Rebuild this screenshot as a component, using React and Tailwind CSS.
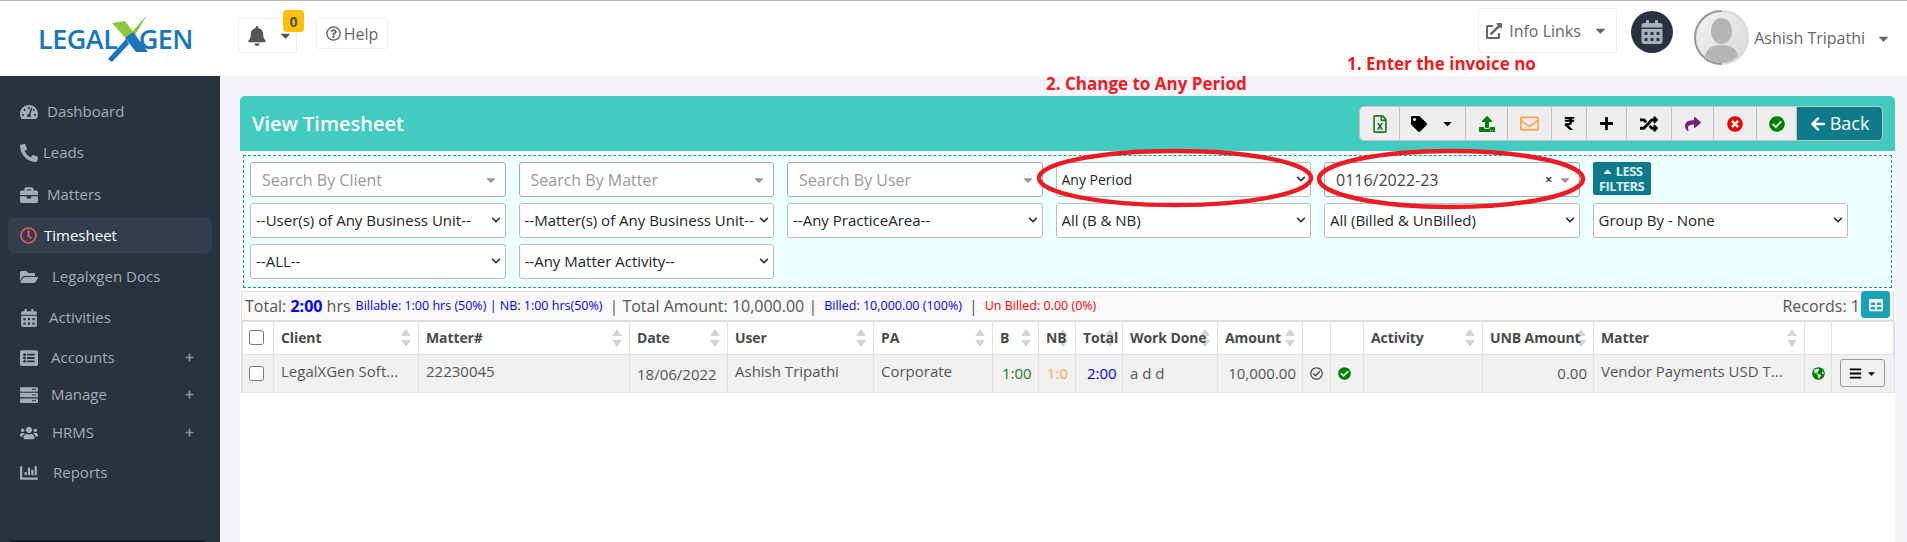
import {
  FaArrowLeft,
  FaBell,
  FaBriefcase,
  FaCalendarAlt,
  FaCaretDown,
  FaCaretUp,
  FaChartBar,
  FaCheckCircle,
  FaChevronDown,
  FaExternalLinkAlt,
  FaFolderOpen,
  FaGlobeAmericas,
  FaListAlt,
  FaPhoneAlt,
  FaPlus,
  FaRandom,
  FaRegCheckCircle,
  FaRegClock,
  FaRegEnvelope,
  FaRegFileExcel,
  FaRegQuestionCircle,
  FaRupeeSign,
  FaServer,
  FaShare,
  FaTachometerAlt,
  FaTable,
  FaTag,
  FaTimesCircle,
  FaUpload,
  FaUsers,
  FaBars,
} from "react-icons/fa";

const sideItems = [
  { label: "Dashboard", icon: FaTachometerAlt, row: "mt-0", gap: "w-[27px]" },
  { label: "Leads", icon: FaPhoneAlt, row: "mt-[6px]", gap: "w-[23px]" },
  { label: "Matters", icon: FaBriefcase, row: "mt-[7px]", gap: "w-[27px]" },
  { label: "Timesheet", icon: FaRegClock, row: "mt-[6px]", gap: "w-[24px]", active: true },
  { label: "Legalxgen Docs", icon: FaFolderOpen, row: "mt-[6px]", gap: "w-[32px]" },
  { label: "Activities", icon: FaCalendarAlt, row: "mt-[6px]", gap: "w-[29px]" },
  { label: "Accounts", icon: FaListAlt, row: "mt-[5px]", gap: "w-[31px]", plus: true },
  { label: "Manage", icon: FaServer, row: "mt-[2px]", gap: "w-[31px]", plus: true },
  { label: "HRMS", icon: FaUsers, row: "mt-[3px]", gap: "w-[32px]", plus: true },
  { label: "Reports", icon: FaChartBar, row: "mt-[5px]", gap: "w-[33px]" },
];

const tools = [
  { icon: FaRegFileExcel, color: "text-[#1d7a1d]", w: "w-[40px]", size: 18 },
  { icon: FaTag, color: "text-black", w: "w-[66px]", caret: true, size: 16 },
  { icon: FaUpload, color: "text-[#0a7d0a]", w: "w-[42px]", size: 16 },
  { icon: FaRegEnvelope, color: "text-[#ffa64d]", w: "w-[44px]", size: 19 },
  { icon: FaRupeeSign, color: "text-black", w: "w-[35px]", size: 15 },
  { icon: FaPlus, color: "text-black", w: "w-[40px]", size: 15 },
  { icon: FaRandom, color: "text-black", w: "w-[45px]", size: 18 },
  { icon: FaShare, color: "text-[#7b1f7b]", w: "w-[42px]", size: 16 },
  { icon: FaTimesCircle, color: "text-[#f00000]", w: "w-[43px]", size: 16 },
  { icon: FaCheckCircle, color: "text-[#008000]", w: "w-[40px]", size: 16 },
];

const columns = [
  { label: "", w: "w-[31px]", check: true },
  { label: "Client", w: "w-[145px]", sort: true },
  { label: "Matter#", w: "w-[211px]", sort: true },
  { label: "Date", w: "w-[98px]", sort: true },
  { label: "User", w: "w-[146px]", sort: true },
  { label: "PA", w: "w-[119px]", sort: true },
  { label: "B", w: "w-[46px]", sort: true },
  { label: "NB", w: "w-[37px]", sort: true },
  { label: "Total", w: "w-[47px]", sort: true },
  { label: "Work Done", w: "w-[95px]", sort: true },
  { label: "Amount", w: "w-[85px]", sort: true },
  { label: "", w: "w-[28px]" },
  { label: "", w: "w-[33px]" },
  { label: "Activity", w: "w-[119px]", sort: true },
  { label: "UNB Amount", w: "w-[111px]", sort: true },
  { label: "Matter", w: "w-[211px]", sort: true },
  { label: "", w: "w-[27px]" },
  { label: "", w: "w-[63px]" },
];

function SortArrows() {
  return (
    <svg width="10" height="18" viewBox="0 0 10 18" className="absolute right-[7px] top-[7px]">
      <path d="M5 0 L10 7 L0 7 Z M5 18 L10 11 L0 11 Z" fill="#d4d4d4" />
    </svg>
  );
}

function Logo() {
  return (
    <div className="relative flex w-[155px] items-center justify-between text-[27px] font-semibold leading-none tracking-[-0.5px] text-[#1b75bc]">
      <span>LEGAL</span>
      <span>GEN</span>
      <svg width="50" height="50" viewBox="0 0 50 50" className="absolute left-[69px] top-[-12px]">
        <path d="M5 10 L18 8 L30 24 L22 29 Z" fill="#8cc63f" />
        <path d="M40 2 L28 22 L22 29 L24 20 Z" fill="#8cc63f" />
        <path d="M18 25 L26 19 L41 39 L29 39 Z" fill="#1b75bc" />
        <path d="M22 31 L5 49 L1 46 L19 26 Z" fill="#1b75bc" />
      </svg>
    </div>
  );
}

function SearchSelect({ placeholder }) {
  return (
    <div className="flex h-[35px] items-center justify-between rounded-[3px] border border-[#aaaaaa] bg-white pl-[11px] pr-[7px]">
      <span className="text-[16px] text-[#999999]">{placeholder}</span>
      <FaCaretDown size={14} className="text-[#999999]" />
    </div>
  );
}

function NativeSelect({ value, small }) {
  return (
    <div className="relative h-[35px]">
      <select
        defaultValue={value}
        className={`h-full w-full appearance-none rounded-[3px] border border-[#bbbbbb] bg-white pl-[5px] pr-[16px] text-[#212529] ${
          small ? "text-[14px]" : "text-[15px]"
        }`}
      >
        <option>{value}</option>
      </select>
      <FaChevronDown size={10} className="absolute right-[5px] top-[12px] text-[#333333]" />
    </div>
  );
}

function Avatar() {
  return (
    <svg width="55" height="55" viewBox="0 0 55 55">
      <defs>
        <linearGradient id="avatarBg" x1="0" y1="0" x2="1" y2="1">
          <stop offset="0" stopColor="#f4f4f4" />
          <stop offset="1" stopColor="#d8d8d8" />
        </linearGradient>
      </defs>
      <circle cx="27.5" cy="27.5" r="26.5" fill="url(#avatarBg)" stroke="#d9d9d9" strokeWidth="2" />
      <path d="M27.5 1 A26.5 26.5 0 1 0 27.5 54" fill="none" stroke="#999999" strokeWidth="2" />
      <ellipse cx="27.5" cy="21" rx="10.5" ry="13" fill="#b5b5b5" />
      <path d="M11 46 C13 37 20 35 27.5 35 C35 35 42 37 44 46 C39 51 33 53 27.5 53 C22 53 16 51 11 46 Z" fill="#b5b5b5" />
    </svg>
  );
}

export default function App() {
  return (
    <div className="relative flex h-[542px] flex-col overflow-hidden bg-white font-['Open_Sans',sans-serif]">
      <header className="flex h-[76px] shrink-0 items-start border-t border-[#bbbbbb] bg-white">
        <div className="ml-[38px] mt-[24px]">
          <Logo />
        </div>
        <div className="relative ml-[45px] mt-[17px] flex h-[35px] w-[59px] items-center rounded-[3px] border border-[#eeeef5] pl-[8px] text-[#555555]">
          <FaBell size={20} />
          <FaCaretDown size={15} className="ml-[11px]" />
          <span className="absolute left-[44px] top-[-9px] flex h-[22px] w-[21px] items-center justify-center rounded-[4px] bg-[#ffc107] text-[14px] font-bold text-[#555555]">
            0
          </span>
        </div>
        <div className="ml-[19px] mt-[17px] flex h-[31px] w-[72px] items-center justify-center gap-[3px] rounded-[3px] border border-[#eeeef5] text-[16px] text-[#666666]">
          <FaRegQuestionCircle size={15} />
          Help
        </div>
        <div className="ml-auto mt-[7px] flex h-[45px] w-[139px] items-center rounded-[3px] border border-[#eeeef5] pl-[7px] text-[16px] text-[#666666]">
          <FaExternalLinkAlt size={16} />
          <span className="ml-[7px]">Info Links</span>
          <FaCaretDown size={15} className="ml-[12px]" />
        </div>
        <div className="ml-[14px] mt-[10px] flex h-[42px] w-[42px] items-center justify-center rounded-full bg-[#29323f]">
          <FaCalendarAlt size={24} className="text-[#a9b0bb]" />
        </div>
        <div className="ml-[21px] mt-[9px]">
          <Avatar />
        </div>
        <span className="ml-[5px] mt-[25px] text-[16px] text-[#666666]">Ashish Tripathi</span>
        <FaCaretDown size={15} className="ml-[11px] mt-[30px] text-[#666666]" />
        <div className="w-[16px]" />
      </header>

      <div className="flex min-h-0 flex-1">
        <aside className="relative w-[220px] shrink-0 bg-[#29323f] px-[8px] pt-[18px]">
          {sideItems.map((item) => (
            <div
              key={item.label}
              className={`flex h-[35px] items-center rounded-[6px] pl-[12px] pr-[18px] text-[15px] ${item.row} ${
                item.active ? "bg-[#333e4c] text-white" : "text-[#a5acb5]"
              }`}
            >
              <span className={`flex shrink-0 items-center ${item.gap}`}>
                <item.icon size={item.active ? 17 : 18} className={item.active ? "text-[#f05a5a]" : "text-[#a5acb5]"} />
              </span>
              <span>{item.label}</span>
              {item.plus && <FaPlus size={9} className="ml-auto text-[#8b939e]" />}
            </div>
          ))}
          <div className="absolute bottom-0 left-[10px] right-[15px] h-[2px] rounded-t bg-[#141b24]" />
        </aside>

        <main className="min-w-0 flex-1 bg-[#f3f5f9] pl-[20px] pr-[12px] pt-[20px]">
          <div className="h-full rounded-t-[5px] bg-white">
            <div className="flex h-[55px] items-center justify-between rounded-t-[5px] bg-[#42cbbf] pl-[12px] pr-[12px]">
              <h1 className="text-[20px] font-semibold text-white">View Timesheet</h1>
              <div className="flex h-[35px] overflow-hidden rounded-[5px] border border-[#c4c4c4] bg-[#eeeeee]">
                {tools.map((tool, i) => (
                  <div
                    key={i}
                    className={`flex items-center justify-center border-r border-[#c4c4c4] ${tool.w} ${tool.color}`}
                  >
                    <tool.icon size={tool.size} />
                    {tool.caret && <FaCaretDown size={13} className="ml-[14px] text-black" />}
                  </div>
                ))}
                <div className="flex w-[85px] items-center justify-center gap-[4px] bg-[#0f7b8a] text-[18px] text-white">
                  <FaArrowLeft size={16} />
                  Back
                </div>
              </div>
            </div>

            <div className="mx-[3px] mt-[4px] h-[133px] border border-dashed border-[#1a9a8a] bg-[#eeffff] px-[6px] pt-[6px]">
              <div className="grid grid-cols-[repeat(6,255.5px)] gap-x-[13px] gap-y-[6px]">
                <SearchSelect placeholder="Search By Client" />
                <SearchSelect placeholder="Search By Matter" />
                <SearchSelect placeholder="Search By User" />
                <NativeSelect value="Any Period" small />
                <div className="flex h-[35px] items-center rounded-[3px] border border-[#aaaaaa] bg-white pl-[11px] pr-[7px] text-[16px] text-[#444444]">
                  <span>0116/2022-23</span>
                  <span className="ml-auto text-[13px] font-bold leading-none">×</span>
                  <FaCaretDown size={14} className="ml-[5px] text-[#999999]" />
                </div>
                <div className="flex h-[33px] w-[58px] flex-col items-center justify-center rounded-[2px] bg-[#0f7b8a] text-[13px] font-bold leading-[15px] tracking-[-0.6px] text-[#d8f0f2]">
                  <span className="flex items-center gap-[2px]">
                    <FaCaretUp size={13} />
                    LESS
                  </span>
                  <span>FILTERS</span>
                </div>
                <NativeSelect value="--User(s) of Any Business Unit--" />
                <NativeSelect value="--Matter(s) of Any Business Unit--" />
                <NativeSelect value="--Any PracticeArea--" />
                <NativeSelect value="All (B & NB)" />
                <NativeSelect value="All (Billed & UnBilled)" />
                <NativeSelect value="Group By - None" />
                <NativeSelect value="--ALL--" />
                <NativeSelect value="--Any Matter Activity--" />
              </div>
            </div>

            <div className="ml-[1px] mr-[1px] mt-[3px] border-x border-t border-[#dddddd]">
              <div className="flex h-[30px] items-center whitespace-nowrap border-b-2 border-[#dddddd] bg-[#f8f8f8] pl-[3px] text-[16px] text-[#555555]">
                <span>
                  Total: <b className="font-bold text-[#0000ff]">2:00</b> hrs
                </span>
                <span className="ml-[5px] text-[12.5px] text-[#0000ff]">Billable: 1:00 hrs (50%) | NB: 1:00 hrs(50%)</span>
                <span className="ml-[7px]">| Total Amount: 10,000.00 |</span>
                <span className="ml-[7px] text-[12.5px] text-[#0000ff]">Billed: 10,000.00 (100%)</span>
                <span className="ml-[7px]">|</span>
                <span className="ml-[7px] text-[12.5px] text-[#ff0000]">Un Billed: 0.00 (0%)</span>
                <span className="ml-auto">Records: 1</span>
                <span className="ml-[1px] mr-[3px] mt-[-3px] flex h-[27px] w-[29px] items-center justify-center rounded-[4px] bg-[#17a2b8] text-white">
                  <FaTable size={14} />
                </span>
              </div>

              <table className="w-[1652px] table-fixed border-collapse text-[15px] text-[#555555]">
                <colgroup>
                  {columns.map((col, i) => (
                    <col key={i} className={col.w} />
                  ))}
                </colgroup>
                <thead>
                  <tr className="h-[32px]">
                    {columns.map((col, i) => (
                      <th
                        key={i}
                        className="relative border-x border-[#dee2e6] pl-[7px] text-left text-[14px] font-bold whitespace-nowrap text-[#4a4a4a]"
                      >
                        {col.sort && <SortArrows />}
                        {col.check ? (
                          <input type="checkbox" className="block size-[15px] -translate-x-px" />
                        ) : (
                          <span className="relative tracking-[-0.1px]">{col.label}</span>
                        )}
                      </th>
                    ))}
                  </tr>
                </thead>
                <tbody>
                  <tr className="h-[38px] border-y border-[#dee2e6] bg-[#f1f1f1] whitespace-nowrap">
                    <td className="border-x border-[#dee2e6] pl-[7px]">
                      <input type="checkbox" className="block size-[15px] -translate-x-px" />
                    </td>
                    <td className="border-x border-[#dee2e6] pl-[7px] pb-[4px]">LegalXGen Soft...</td>
                    <td className="border-x border-[#dee2e6] pl-[7px] pb-[4px]">22230045</td>
                    <td className="border-x border-[#dee2e6] pl-[7px] pt-[2px]">18/06/2022</td>
                    <td className="border-x border-[#dee2e6] pl-[7px] pb-[4px]">Ashish Tripathi</td>
                    <td className="border-x border-[#dee2e6] pl-[7px] pb-[4px]">Corporate</td>
                    <td className="border-x border-[#dee2e6] pl-[9px] text-[#1d7a1d]">1:00</td>
                    <td className="border-x border-[#dee2e6] pl-[8px] text-[#ffa64d]">1:0</td>
                    <td className="border-x border-[#dee2e6] pl-[11px] text-[#0000ff]">2:00</td>
                    <td className="border-x border-[#dee2e6] pl-[7px]">a d d</td>
                    <td className="border-x border-[#dee2e6] pr-[6px] text-right">10,000.00</td>
                    <td className="border-x border-[#dee2e6] pl-[7px]">
                      <FaRegCheckCircle size={13} className="text-[#444444]" />
                    </td>
                    <td className="border-x border-[#dee2e6] pl-[7px]">
                      <FaCheckCircle size={13} className="text-[#008000]" />
                    </td>
                    <td className="border-x border-[#dee2e6]" />
                    <td className="border-x border-[#dee2e6] pr-[6px] text-right">0.00</td>
                    <td className="border-x border-[#dee2e6] pl-[7px] pb-[4px]">Vendor Payments USD T...</td>
                    <td className="border-x border-[#dee2e6] pl-[7px]">
                      <FaGlobeAmericas size={13} className="text-[#008000]" />
                    </td>
                    <td className="border-x border-[#dee2e6] pl-[8px]">
                      <div className="flex h-[28px] w-[45px] items-center justify-center gap-[4px] rounded-[3px] border border-[#999999] text-black">
                        <FaBars size={13} />
                        <FaCaretDown size={11} />
                      </div>
                    </td>
                  </tr>
                </tbody>
              </table>
            </div>
          </div>
        </main>
      </div>

      {/* red notes drawn over the page */}
      <span className="absolute left-[1347px] top-[51px] text-[17px] font-bold text-[#ed1c24]">1. Enter the invoice no</span>
      <span className="absolute left-[1046px] top-[71px] text-[17px] font-bold text-[#ed1c24]">2. Change to Any Period</span>
      <svg width="560" height="70" viewBox="0 0 560 70" className="pointer-events-none absolute left-[1033px] top-[145px]">
        <ellipse cx="142" cy="33" rx="136" ry="27" fill="none" stroke="#ed1c24" strokeWidth="4.5" />
        <ellipse cx="418" cy="34" rx="132" ry="28" fill="none" stroke="#ed1c24" strokeWidth="4.5" />
      </svg>
    </div>
  );
}
